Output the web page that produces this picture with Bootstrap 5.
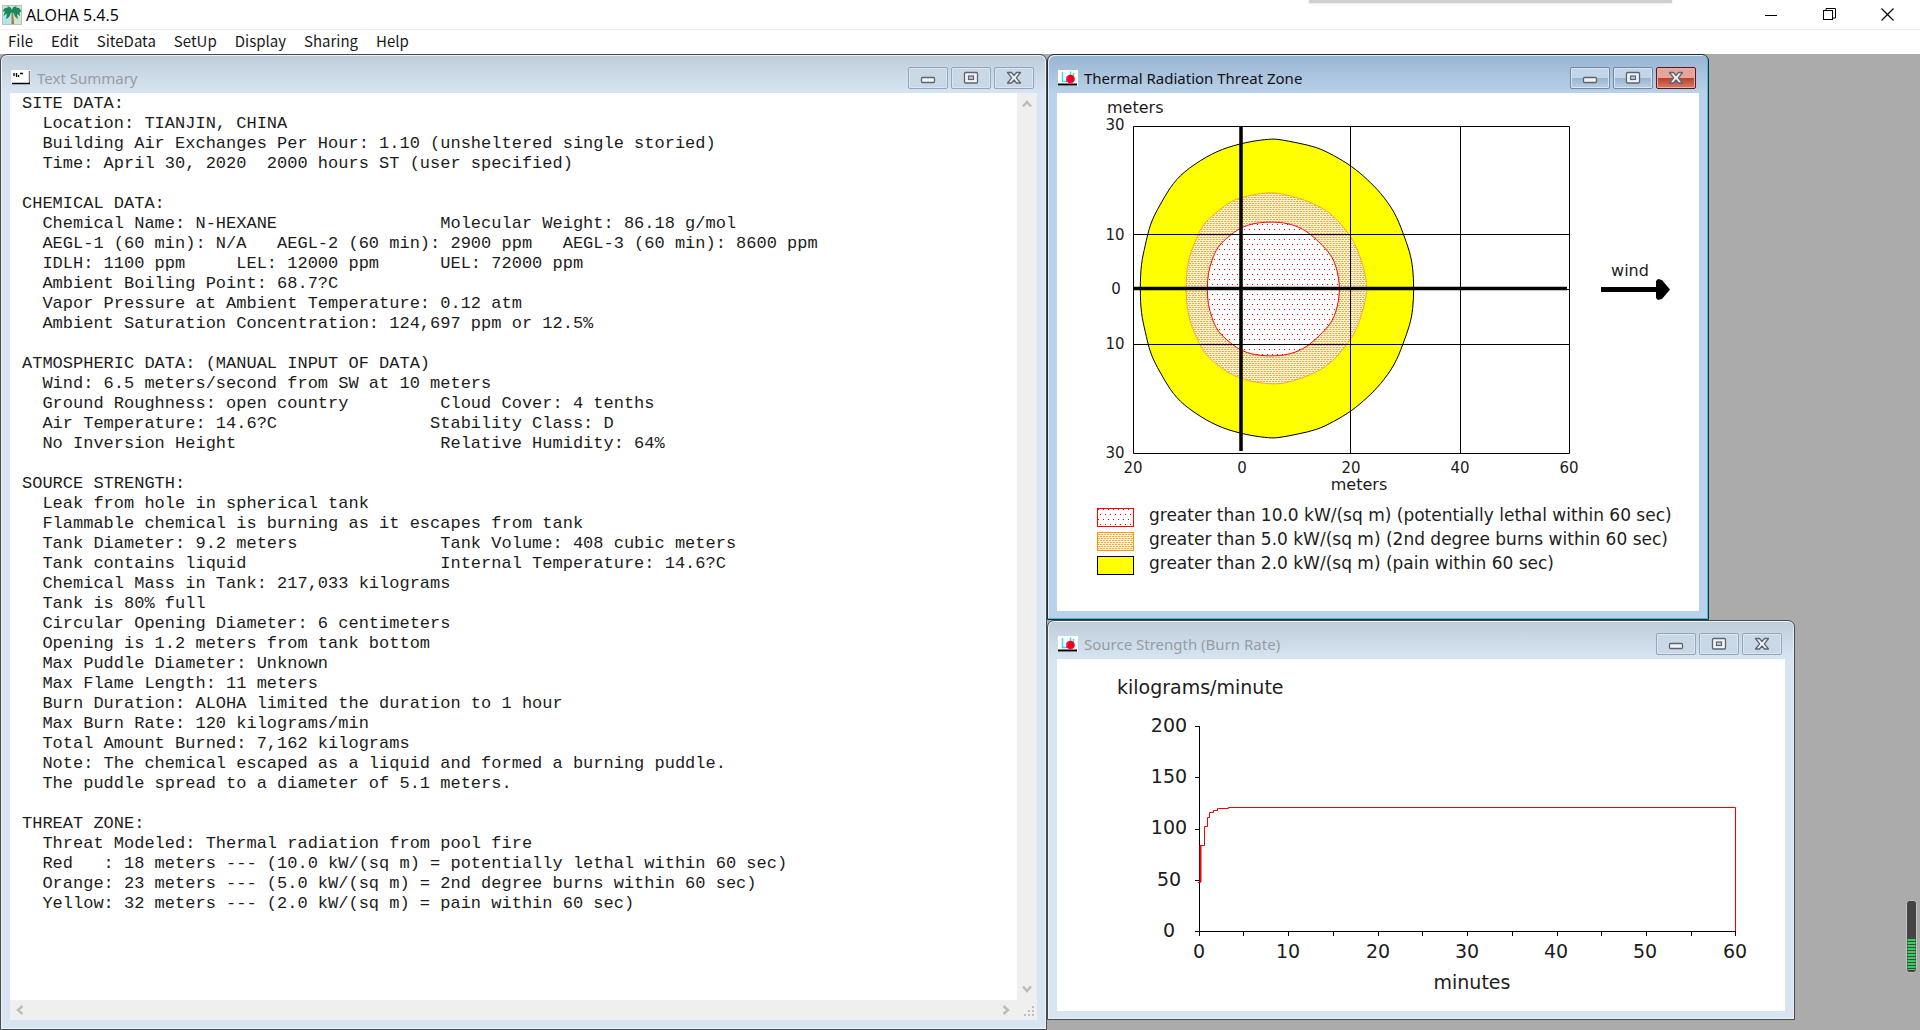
<!DOCTYPE html>
<html lang="en">
<head>
<meta charset="utf-8">
<title>ALOHA 5.4.5</title>
<meta name="viewport" content="width=device-width, initial-scale=1">
<link href="https://cdn.jsdelivr.net/npm/bootstrap@5.3.0/dist/css/bootstrap.min.css" rel="stylesheet">
<style>
body{font:15px/20px "Noto Sans CJK SC","Noto Sans",sans-serif;color:#000;background:#ababab;overflow:hidden}
.app-title{height:29px;background:#fff;padding:0 4px 0 2px;font:16px/20px "Open Sans",sans-serif}
.sysbtn{width:58px;height:28px;border:0;background:none;padding:0;line-height:0}
.menu-strip{height:25px;background:#fff;border-top:1px solid #f0f0f0;padding:0 8px 2px;gap:18px}
.menu-strip a{color:#1a1a1a;text-decoration:none}
.win{border:1px solid #4a4a4a;border-radius:7px 7px 0 0;background:linear-gradient(#bfcddb,#d7e4f2 38px);box-shadow:inset 0 0 0 1px #e9f1f9;padding:0 9px 8px;color:#979ca2}
.win.active{background:linear-gradient(#99b4d1,#b9d1ea 38px);border-color:#222b30;box-shadow:inset -1px -1px 0 0 #35c3e0,inset 1px 1px 0 0 #e2edf8;color:#111}
.text-win{padding-bottom:9px}
.win-head{height:38px;gap:6px;padding:8px 3px 0 1px}
.win-head h2{font:15px/20px "Noto Sans",sans-serif;margin:0}
.btnset{gap:3px}
.win-btn{width:40px;height:22px;padding:0;line-height:0;border:1px solid #95a5bd;border-radius:2px;background:#c9d8e7;box-shadow:inset 0 0 0 1px #dbe6f1}
.active .win-btn{border-color:#7188a3;background:linear-gradient(#c3d5e8 48%,#9bb5cf 52%,#b8cfe6)}
.active .win-close{border-color:#5a1420;background:linear-gradient(#e6a59b 48%,#bd4129 52%,#d67a66);box-shadow:inset 0 0 0 1px #e8b0a6}
.pane{background:#fff;color:#1c1c1c}
.summary{font:17px/20px "Liberation Mono",monospace;margin:0;padding:1px 0 0 12px;color:#1c1c1c}
.sb{background:#efefef}
.sb-v{width:20px;padding:6px 0}
.sb-h{height:20px;padding:0 3px 0 5px}
.sb-end{gap:13px}
.right-col{width:873px}
.zone{width:662px}
.strength{width:748px}
.zone .pane,.strength .pane{font-family:"DejaVu Sans",sans-serif}
.pane svg{display:block}
.legend-list{margin:0;padding:0 0 34px 40px;font-size:17px;line-height:20px}
.legend-list li{gap:15px;height:24px}
.legend-list svg{margin-top:3px}
.gauge{position:absolute;right:3px;bottom:57px;width:11px;height:73px}
.drop{position:absolute;top:0;left:1309px;width:363px;height:3px;background:#d0d0d0;box-shadow:0 0 3px #d0d0d0}
</style>
<script src="https://cdn.jsdelivr.net/npm/bootstrap@5.3.0/dist/js/bootstrap.bundle.min.js"></script>
</head>
<body class="vh-100 d-flex flex-column position-relative">
<svg width="0" height="0" class="position-absolute" aria-hidden="true">
<defs>
<pattern id="redDots" width="5" height="10" patternUnits="userSpaceOnUse"><rect width="5" height="10" fill="#fff"/><rect x="1" y="1" width="1" height="1" fill="#f00"/><rect x="3" y="6" width="1" height="1" fill="#f00"/></pattern>
<pattern id="orangeDots" width="3" height="4" patternUnits="userSpaceOnUse"><rect width="3" height="4" fill="#fff3e0"/><rect width="2" height="1" fill="#ffa726"/><rect x="1" y="2" width="2" height="1" fill="#ffa726"/></pattern>
<symbol id="i-min" viewBox="0 0 16 14"><rect x="1.5" y="6.5" width="13" height="5" rx="1" fill="#f4f4f4" stroke="#5c6472" stroke-width="1.3"/></symbol>
<symbol id="i-max" viewBox="0 0 16 14"><rect x="1.5" y="1.5" width="13" height="10.5" rx="1" fill="#f4f4f4" stroke="#5c6472" stroke-width="1.3"/><rect x="5.5" y="5" width="5" height="3.5" fill="#b9c9dc" stroke="#5c6472" stroke-width="1.2"/></symbol>
<symbol id="i-close" viewBox="0 0 16 14"><path d="M1.5 1.5H5.5L8 4.5 10.5 1.5H14.500L10.300 6.800 14.500 12H10.500L8 9 5.500 12H1.500L5.700 6.800Z" fill="#f4f4f4" stroke="#5c6472" stroke-width="1.3" stroke-linejoin="round"/></symbol>
<symbol id="i-plot" viewBox="0 0 20 16"><rect width="20" height="16" fill="#fff"/><path d="M4.500 2V11.500H9M12.500 1.500V6M15.500 3v3" stroke="#3df" stroke-width="1.500" fill="none"/><path d="M0 14.500H19" stroke="#000" stroke-width="2"/><circle cx="12.500" cy="9" r="4.300" fill="#f00010"/><path d="M9.500 6 9 12M12 13l2-1" stroke="#f0a" stroke-width="1.500"/></symbol>
</defs></svg>

<header class="app-title d-flex align-items-center justify-content-between">
<div class="d-flex align-items-center gap-1">
<svg width="20" height="20" viewBox="0 0 20 20" aria-hidden="true"><rect width="20" height="20" fill="#b9c2ba"/><rect x="1" y="1" width="18" height="18" fill="#d3e3cd"/><path d="M1 10h7v9H1z" fill="#b2e4ec"/><path d="M9.500 7H11L12 19H9.500Z" fill="#9b7650"/><path d="M10 5C9 2 7 1 5 1.500L6 3C3 2 1 4 1 7L3 6 1.500 11 5 8.500 4 14C7 13 8 11 8.500 8.500L10 7 12 8.500C12 11 14 13 16 14L15 9 18 11 17.500 7 19 7C19 4 17 2 14 3L15 1.500C12 1 10.500 2 10 5Z" fill="#17895f"/></svg>
<span>ALOHA 5.4.5</span></div>
<div class="d-flex">
<button class="sysbtn" aria-label="Minimize"><svg width="12" height="12"><path d="M0 6.500H12" stroke="#000"/></svg></button>
<button class="sysbtn" aria-label="Restore"><svg width="13" height="13" fill="none" stroke="#000"><rect x=".5" y="2.500" width="9" height="9"/><path d="M3 2.500V.5H12.500V10H10"/></svg></button>
<button class="sysbtn" aria-label="Close"><svg width="13" height="13"><path d="M.5.5 12.500 12.500M12.500.5.5 12.500" stroke="#000" stroke-width="1.200"/></svg></button>
</div></header>
<nav class="menu-strip d-flex align-items-center"><a href="#">File</a><a href="#">Edit</a><a href="#">SiteData</a><a href="#">SetUp</a><a href="#">Display</a><a href="#">Sharing</a><a href="#">Help</a></nav>

<main class="d-flex flex-fill overflow-hidden">
<section class="win text-win d-flex flex-column flex-fill">
<div class="win-head d-flex align-items-center">
<svg width="20" height="16" viewBox="0 0 20 16" aria-hidden="true"><rect width="20" height="14" fill="#fff"/><path d="M18.500 1V13" stroke="#777" stroke-width="1.500"/><path d="M1 13.500H19" stroke="#000" stroke-width="1.500"/><path d="M3 3v3M5.500 3v4M7.500 5v2M9 3.500h3" stroke="#000" stroke-width="1.300"/></svg>
<h2 class="me-auto">Text Summary</h2>
<div class="d-flex btnset"><button class="win-btn" aria-label="Minimize"><svg width="16" height="14"><use href="#i-min"/></svg></button><button class="win-btn" aria-label="Maximize"><svg width="16" height="14"><use href="#i-max"/></svg></button><button class="win-btn win-close" aria-label="Close"><svg width="16" height="14"><use href="#i-close"/></svg></button></div>
</div>
<div class="pane d-flex flex-fill overflow-hidden">
<pre class="summary flex-fill">SITE DATA:
  Location: TIANJIN, CHINA
  Building Air Exchanges Per Hour: 1.10 (unsheltered single storied)
  Time: April 30, 2020  2000 hours ST (user specified)

CHEMICAL DATA:
  Chemical Name: N-HEXANE                Molecular Weight: 86.18 g/mol
  AEGL-1 (60 min): N/A   AEGL-2 (60 min): 2900 ppm   AEGL-3 (60 min): 8600 ppm
  IDLH: 1100 ppm     LEL: 12000 ppm      UEL: 72000 ppm
  Ambient Boiling Point: 68.7?C
  Vapor Pressure at Ambient Temperature: 0.12 atm
  Ambient Saturation Concentration: 124,697 ppm or 12.5%

ATMOSPHERIC DATA: (MANUAL INPUT OF DATA)
  Wind: 6.5 meters/second from SW at 10 meters
  Ground Roughness: open country         Cloud Cover: 4 tenths
  Air Temperature: 14.6?C               Stability Class: D
  No Inversion Height                    Relative Humidity: 64%

SOURCE STRENGTH:
  Leak from hole in spherical tank
  Flammable chemical is burning as it escapes from tank
  Tank Diameter: 9.2 meters              Tank Volume: 408 cubic meters
  Tank contains liquid                   Internal Temperature: 14.6?C
  Chemical Mass in Tank: 217,033 kilograms
  Tank is 80% full
  Circular Opening Diameter: 6 centimeters
  Opening is 1.2 meters from tank bottom
  Max Puddle Diameter: Unknown
  Max Flame Length: 11 meters
  Burn Duration: ALOHA limited the duration to 1 hour
  Max Burn Rate: 120 kilograms/min
  Total Amount Burned: 7,162 kilograms
  Note: The chemical escaped as a liquid and formed a burning puddle.
  The puddle spread to a diameter of 5.1 meters.

THREAT ZONE:
  Threat Modeled: Thermal radiation from pool fire
  Red   : 18 meters --- (10.0 kW/(sq m) = potentially lethal within 60 sec)
  Orange: 23 meters --- (5.0 kW/(sq m) = 2nd degree burns within 60 sec)
  Yellow: 32 meters --- (2.0 kW/(sq m) = pain within 60 sec)</pre>
<div class="sb sb-v d-flex flex-column justify-content-between align-items-center" aria-hidden="true"><svg width="12" height="10"><path d="M2 7.500 6 3 10 7.500" fill="none" stroke="#bdbdbd" stroke-width="2.500"/></svg><svg width="12" height="10"><path d="M2 2.500 6 7 10 2.500" fill="none" stroke="#bdbdbd" stroke-width="2.500"/></svg></div>
</div>
<div class="sb sb-h d-flex justify-content-between align-items-center" aria-hidden="true"><svg width="10" height="12"><path d="M7.500 2 3 6 7.500 10" fill="none" stroke="#bdbdbd" stroke-width="2.500"/></svg><div class="d-flex align-items-end sb-end"><svg width="10" height="12"><path d="M2.500 2 7 6 2.500 10" fill="none" stroke="#bdbdbd" stroke-width="2.500"/></svg><svg width="10" height="10" fill="#bdbdbd"><path d="M8 0h2v2H8zM4 4h2v2H4zM8 4h2v2H8zM0 8h2v2H0zM4 8h2v2H4zM8 8h2v2H8z"/></svg></div></div>
</section>

<div class="right-col flex-shrink-0 d-flex flex-column">
<section class="win active zone">
<div class="win-head d-flex align-items-center"><svg width="20" height="16" aria-hidden="true"><use href="#i-plot"/></svg><h2 class="me-auto">Thermal Radiation Threat Zone</h2>
<div class="d-flex btnset"><button class="win-btn" aria-label="Minimize"><svg width="16" height="14"><use href="#i-min"/></svg></button><button class="win-btn" aria-label="Maximize"><svg width="16" height="14"><use href="#i-max"/></svg></button><button class="win-btn win-close" aria-label="Close"><svg width="16" height="14"><use href="#i-close"/></svg></button></div></div>
<div class="pane">
<svg width="642" height="412" viewBox="1 0 642 412" font-size="15" fill="#1c1c1c" text-anchor="middle" role="img" aria-label="Threat zone plot">
<path class="contour" data-points="214 46 196 48 171 54 151 63 127 79 114 94 104 112 94 130 89 154 85 170 84 196 85 221 89 237 94 261 104 279 114 297 127 312 151 328 171 337 196 343 214 345 222 345 242 341 261 337 277 329 296 318 312 304 324 292 339 272 347 251 354 232 357 216 358 196 357 175 354 159 347 140 339 119 324 99 312 87 296 73 277 62 261 54 242 50 222 46" fill="#ff0" stroke="#000"/>
<path class="contour" data-points="214 99 196 102 178 106 166 115 147 130 141 145 133 162 130 184 130 206 133 228 141 245 147 260 166 276 178 283 196 289 214 291 227 291 247 285 267 276 279 266 296 246 304 228 310 206 311 195 310 184 304 162 296 144 279 124 267 115 247 106 227 101" fill="url(#orangeDots)" stroke="#ffa726"/>
<path class="contour" data-points="204 129 187 133 174 142 161 154 156 167 152 180 151 196 152 212 156 225 161 238 174 250 187 259 204 263 224 263 239 260 254 252 267 239 277 228 282 212 284 196 282 180 277 164 267 153 254 140 239 132 224 129" fill="url(#redDots)" stroke="#f00"/>
<g stroke="#000" fill="none"><path d="M77.500 33.500H513.500V360.500H77.500ZM294.500 33V360M404.500 33V360M77 141.500H513M77 196.500H513M77 251.500H513"/>
<path d="M185 33V358M77 195.500H511" stroke-width="3.500"/></g>
<path d="M545 196.500H603" stroke="#000" stroke-width="5"/><path d="M600 188 602 186 606 187 614 196.500 606 206 602 207 600 205Z" fill="#000"/>
<text x="51" y="20" text-anchor="start" font-size="16">meters</text>
<text x="59" y="37">30</text><text x="59" y="147">10</text><text x="60" y="201">0</text><text x="59" y="256">10</text><text x="59" y="365">30</text>
<text x="77" y="380">20</text><text x="186" y="380">0</text><text x="295" y="380">20</text><text x="404" y="380">40</text><text x="513" y="380">60</text>
<text x="303" y="397" font-size="16">meters</text><text x="574" y="183" font-size="16">wind</text>
</svg>
<ul class="legend-list list-unstyled">
<li class="d-flex align-items-start"><svg width="37" height="19" aria-hidden="true"><rect x=".5" y=".5" width="36" height="18" fill="url(#redDots)" stroke="#f00"/></svg><span>greater than 10.0 kW/(sq m) (potentially lethal within 60 sec)</span></li>
<li class="d-flex align-items-start"><svg width="37" height="19" aria-hidden="true"><rect x=".5" y=".5" width="36" height="18" fill="url(#orangeDots)" stroke="#ff9800"/></svg><span>greater than 5.0 kW/(sq m) (2nd degree burns within 60 sec)</span></li>
<li class="d-flex align-items-start"><svg width="37" height="19" aria-hidden="true"><rect x=".5" y=".5" width="36" height="18" fill="#ff0" stroke="#000"/></svg><span>greater than 2.0 kW/(sq m) (pain within 60 sec)</span></li>
</ul>
</div>
</section>
<section class="win strength">
<div class="win-head d-flex align-items-center"><svg width="20" height="16" aria-hidden="true"><use href="#i-plot"/></svg><h2 class="me-auto">Source Strength (Burn Rate)</h2>
<div class="d-flex btnset"><button class="win-btn" aria-label="Minimize"><svg width="16" height="14"><use href="#i-min"/></svg></button><button class="win-btn" aria-label="Maximize"><svg width="16" height="14"><use href="#i-max"/></svg></button><button class="win-btn win-close" aria-label="Close"><svg width="16" height="14"><use href="#i-close"/></svg></button></div></div>
<div class="pane">
<svg width="728" height="352" viewBox="0 1 728 352" font-size="19" fill="#1c1c1c" text-anchor="middle" role="img" aria-label="Burn rate over time">
<path d="M142.500 68V273.500H679M138 68.500H142M138 119.500H142M138 171.500H142M138 222.500H142M138 273.500H142M142.500 273V278M186.500 273V278M231.500 273V278M276.500 273V278M321.500 273V278M365.500 273V278M410.500 273V278M455.500 273V278M500.500 273V278M544.500 273V278M589.500 273V278M634.500 273V278M678.500 273V278" stroke="#000" fill="none"/>
<path d="M141 224.500H143.500V187.500H147.500V168.500H150.500V159.500H152.500V154.500H156.500V152.500H160.500V150.500H171.500V149.500H678.500V273" stroke="#f00000" fill="none"/><path d="M143.500 187V224" stroke="#f00" stroke-width="2"/>
<text x="60" y="36" text-anchor="start">kilograms/minute</text>
<text x="112" y="74">200</text><text x="112" y="125">150</text><text x="112" y="176">100</text><text x="112" y="228">50</text><text x="112" y="279">0</text>
<text x="142" y="300">0</text><text x="231" y="300">10</text><text x="321" y="300">20</text><text x="410" y="300">30</text><text x="499" y="300">40</text><text x="588" y="300">50</text><text x="678" y="300">60</text>
<text x="415" y="331">minutes</text>
</svg></div>
</section>
</div>
</main>
<div class="drop" aria-hidden="true"></div>
<svg class="gauge" viewBox="0 0 11 73" aria-hidden="true"><rect x=".5" y=".5" width="10" height="72" rx="3" fill="#444" stroke="#c4c4c4"/><path d="M5.500 39V70" stroke="#35d05c" stroke-width="8" stroke-dasharray="2 1"/></svg>
<script>
// Draws each closed contour as a cubic B-spline over its points.
document.querySelectorAll('.contour').forEach(function (el) {
  var v = el.dataset.points.split(' ').map(Number), p = [], i;
  for (i = 0; i < v.length; i += 2) p.push([v[i], v[i + 1]]);
  var n = p.length, d = '';
  function mix(a, b, c, wa, wb, wc) {
    return [0, 1].map(function (k) { return (wa * a[k] + wb * b[k] + wc * c[k]) / 6; });
  }
  for (i = 0; i < n; i++) {
    var a = p[(i + n - 1) % n], b = p[i], c = p[(i + 1) % n], e = p[(i + 2) % n];
    if (!i) d = 'M' + mix(a, b, c, 1, 4, 1);
    d += 'C' + [mix(a, b, c, 0, 4, 2), mix(a, b, c, 0, 2, 4), mix(b, c, e, 1, 4, 1)].join(' ');
  }
  el.setAttribute('d', d + 'Z');
});
</script>
</body>
</html>
